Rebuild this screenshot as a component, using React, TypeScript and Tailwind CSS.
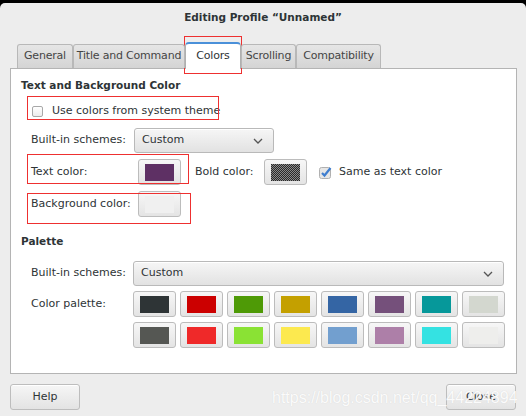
import React from 'react';

const paletteTop = ['#2e3436', '#cc0000', '#4e9a06', '#c4a000', '#3465a4', '#75507b', '#06989a', '#d3d7cf'];
const paletteBottom = ['#555753', '#ef2929', '#8ae234', '#fce94f', '#729fcf', '#ad7fa8', '#34e2e2', '#eeeeec'];

const tabs = [
  { label: 'General', width: 'w-[56px]' },
  { label: 'Title and Command', width: 'w-[112px]' },
  { label: 'Colors', width: 'w-[56px]', active: true },
  { label: 'Scrolling', width: 'w-[55px]' },
  { label: 'Compatibility', width: 'w-[85px]' },
];

const Chevron = () => (
  <svg width="10" height="6" viewBox="0 0 10 6" fill="none">
    <path d="M1 1l4 4 4-4" stroke="#555" strokeWidth="1.3" />
  </svg>
);

const Dropdown = ({ width }: { width: string }) => (
  <div
    className={`${width} h-[25px] flex items-center justify-between pl-[7px] pr-[10px] rounded-[3px] border border-[#b9b9b9] bg-gradient-to-b from-[#f6f6f6] to-[#e2e2e2] shadow-[inset_0_1px_0_#fff]`}
  >
    <span>Custom</span>
    <Chevron />
  </div>
);

// colour button, as used for text / bg / palette entries
const Swatch = ({ color, children }: { color?: string; children?: React.ReactNode }) => (
  <div className="w-[43px] h-[26px] flex items-center justify-center rounded-[3px] border border-[#bcbcbc] bg-gradient-to-b from-[#f7f7f7] to-[#e4e4e4]">
    {children ?? <div className="w-[29px] h-[17px]" style={{ backgroundColor: color }} />}
  </div>
);

const Checker = () => (
  <svg width="29" height="17">
    <defs>
      <pattern id="chk" width="2" height="2" patternUnits="userSpaceOnUse">
        <rect width="2" height="2" fill="#8a8a8a" />
        <rect width="1" height="1" fill="#2a2a2a" />
        <rect x="1" y="1" width="1" height="1" fill="#2a2a2a" />
      </pattern>
    </defs>
    <rect width="29" height="17" fill="url(#chk)" />
  </svg>
);

const Button = ({ label }: { label: string }) => (
  <div className="w-[70px] h-[26px] flex items-center justify-center rounded-[3px] border border-[#bdbdbd] bg-gradient-to-b from-[#f6f6f6] to-[#e3e3e3] shadow-[inset_0_1px_0_#fff]">
    {label}
  </div>
);

export default function App() {
  return (
    <div className="relative w-[526px] h-[416px] bg-black overflow-hidden font-['DejaVu_Sans',sans-serif] text-[11px] text-[#2e3436]">
      <div className="mt-[3px] h-[413px] bg-[#ededed] rounded-t-[5px] flex flex-col">
        {/* title bar */}
        <div className="h-[26px] flex items-center justify-center font-bold text-[10.5px] text-[#2e3436] pt-[4px]">
          Editing Profile “Unnamed”
        </div>

        {/* tabs */}
        <div className="relative z-10 mt-[11px] pl-[17px] flex items-end h-[28px] tracking-[-0.2px]">
          {tabs.map((t) =>
            t.active ? (
              <div
                key={t.label}
                className={`${t.width} h-[27px] -mb-px flex items-center justify-center bg-white rounded-t-[4px] border border-b-0 border-[#b0b0b0] border-t-2 border-t-[#4a90d9] text-[#2e3436]`}
              >
                {t.label}
              </div>
            ) : (
              <div
                key={t.label}
                className={`${t.width} h-[24px] flex items-center justify-center rounded-t-[3px] border border-b-0 border-[#b8b8b8] bg-gradient-to-b from-[#e6e6e6] to-[#d4d4d4] text-[#454545]`}
              >
                {t.label}
              </div>
            )
          )}
        </div>

        {/* page */}
        <div className="mx-[10px] w-[507px] h-[306px] border border-[#b4b4b4] bg-white pt-[9px] pl-[10px]">
          <div className="font-bold text-[10.5px] h-[16px] flex items-center">Text and Background Color</div>

          <div className="mt-[5px] h-[24px] pl-[11px] flex items-center gap-[9px]">
            <div className="w-[11px] h-[11px] rounded-[2px] border border-[#a8a8a8] bg-gradient-to-b from-white to-[#ececec]" />
            <span>Use colors from system theme</span>
          </div>

          <div className="mt-[5px] pl-[10px] flex items-center h-[25px]">
            <span className="w-[103px]">Built-in schemes:</span>
            <Dropdown width="w-[140px]" />
          </div>

          <div className="mt-[6px] pl-[10px] flex items-center h-[26px]">
            <span className="w-[107px]">Text color:</span>
            <Swatch color="#5e3064" />
            <span className="ml-[14px] w-[69px]">Bold color:</span>
            <Swatch>
              <Checker />
            </Swatch>
            <div className="ml-[12px] flex items-center gap-[7px]">
              <svg width="13" height="13" viewBox="0 0 13 13">
                <rect x="0.5" y="1.5" width="11" height="11" rx="2" fill="#e6e6e6" stroke="#b0b0b0" />
                <path d="M3 7l2.5 2.5L11.5 2" stroke="#3f7ecf" strokeWidth="2.2" fill="none" />
              </svg>
              <span>Same as text color</span>
            </div>
          </div>

          <div className="mt-[6px] pl-[10px] flex items-center h-[26px]">
            <span className="w-[107px]">Background color:</span>
            <Swatch color="#f0f0f0" />
          </div>

          <div className="mt-[17px] font-bold text-[10.5px] h-[16px] flex items-center">Palette</div>

          <div className="mt-[11px] pl-[10px] flex items-center h-[25px]">
            <span className="w-[102px]">Built-in schemes:</span>
            <Dropdown width="w-[371px]" />
          </div>

          <div className="mt-[5px] pl-[10px] flex">
            <span className="w-[102px] pt-[5px]">Color palette:</span>
            <div className="flex flex-col gap-[5px]">
              <div className="flex gap-[4px]">
                {paletteTop.map((c) => (
                  <Swatch key={c} color={c} />
                ))}
              </div>
              <div className="flex gap-[4px]">
                {paletteBottom.map((c) => (
                  <Swatch key={c} color={c} />
                ))}
              </div>
            </div>
          </div>
        </div>

        {/* bottom buttons */}
        <div className="mt-[10px] px-[10px] flex justify-between">
          <Button label="Help" />
          <Button label="Close" />
        </div>
      </div>

      {/* red annotation boxes */}
      <div className="absolute left-[184px] top-[36px] w-[58px] h-[38px] border border-[#ee3030]" />
      <div className="absolute left-[27px] top-[96px] w-[192px] h-[24px] border border-[#ee3030]" />
      <div className="absolute left-[27px] top-[154px] w-[162px] h-[30px] border border-[#ee3030]" />
      <div className="absolute left-[27px] top-[193px] w-[164px] h-[31px] border border-[#ee3030]" />

      {/* watermark */}
      <div className="absolute left-[272px] top-[386px] font-['Liberation_Sans',sans-serif] text-[16px] text-white/90 [text-shadow:0_0_1px_#cfcfcf]">
        https://blog.csdn.net/qq_44224894
      </div>
    </div>
  );
}
